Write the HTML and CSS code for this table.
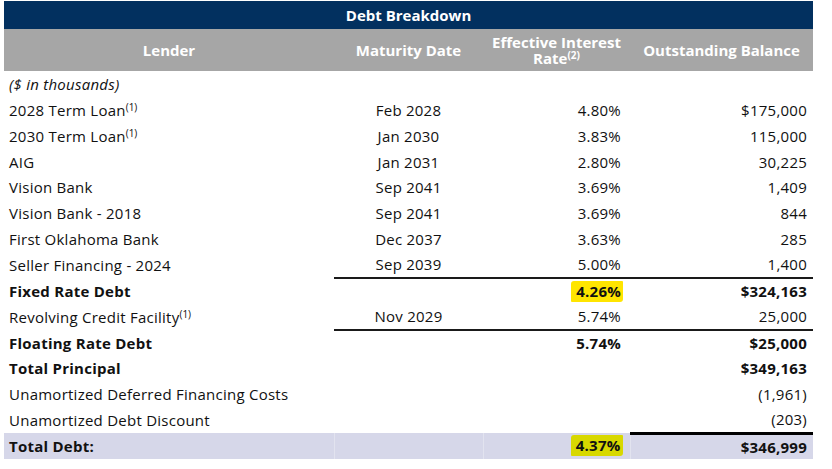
FILE: index.html
```html
<!DOCTYPE html>
<html>
<head>
<meta charset="utf-8">
<link rel="stylesheet" href="styles.css">
</head>
<body>
<table class="debt">
  <colgroup>
    <col class="c-lender"><col class="c-date"><col class="c-rate"><col class="c-bal">
  </colgroup>
  <thead>
    <tr class="title"><th colspan="4">Debt Breakdown</th></tr>
    <tr class="heads">
      <th>Lender</th>
      <th>Maturity Date</th>
      <th><span class="hline">Effective Interest</span><span class="hline">Rate<sup>(2)</sup></span></th>
      <th>Outstanding Balance</th>
    </tr>
  </thead>
  <tbody>
    <tr><td class="note">($ in thousands)</td><td></td><td></td><td></td></tr>
    <tr><td>2028 Term Loan<sup>(1)</sup></td><td class="ctr">Feb 2028</td><td class="num rate">4.80%</td><td class="num">$175,000</td></tr>
    <tr><td>2030 Term Loan<sup>(1)</sup></td><td class="ctr">Jan 2030</td><td class="num rate">3.83%</td><td class="num">115,000</td></tr>
    <tr><td>AIG</td><td class="ctr">Jan 2031</td><td class="num rate">2.80%</td><td class="num">30,225</td></tr>
    <tr><td>Vision Bank</td><td class="ctr">Sep 2041</td><td class="num rate">3.69%</td><td class="num">1,409</td></tr>
    <tr><td>Vision Bank - 2018</td><td class="ctr">Sep 2041</td><td class="num rate">3.69%</td><td class="num">844</td></tr>
    <tr><td>First Oklahoma Bank</td><td class="ctr">Dec 2037</td><td class="num rate">3.63%</td><td class="num">285</td></tr>
    <tr class="ruled"><td>Seller Financing - 2024</td><td class="ctr">Sep 2039</td><td class="num rate">5.00%</td><td class="num">1,400</td></tr>
    <tr class="bold"><td>Fixed Rate Debt</td><td></td><td class="num rate"><span class="hl hl-yellow">4.26%</span></td><td class="num">$324,163</td></tr>
    <tr class="ruled"><td>Revolving Credit Facility<sup>(1)</sup></td><td class="ctr">Nov 2029</td><td class="num rate">5.74%</td><td class="num">25,000</td></tr>
    <tr class="bold"><td>Floating Rate Debt</td><td></td><td class="num rate">5.74%</td><td class="num">$25,000</td></tr>
    <tr class="bold"><td>Total Principal</td><td></td><td></td><td class="num">$349,163</td></tr>
    <tr><td>Unamortized Deferred Financing Costs</td><td></td><td></td><td class="num">(1,961)</td></tr>
    <tr><td>Unamortized Debt Discount</td><td></td><td></td><td class="num">(203)</td></tr>
    <tr class="bold total"><td>Total Debt:</td><td></td><td class="num rate"><span class="hl hl-olive">4.37%</span></td><td class="num topline">$346,999</td></tr>
  </tbody>
</table>
</body>
</html>
```

FILE: styles.css
```css
html, body {
  margin: 0;
  padding: 0;
  background: #ffffff;
}

body {
  padding: 1px 0 0 4px;
  font-family: "Open Sans", "Noto Sans", sans-serif;
  font-size: 15px;
  color: #111111;
}

.debt {
  border-collapse: collapse;
  table-layout: fixed;
  width: 809px;
}

.c-lender { width: 330px; }
.c-date { width: 149px; }
.c-rate { width: 147px; }
.c-bal { width: 183px; }

.debt th,
.debt td {
  padding: 0;
  white-space: nowrap;
}

.title th {
  background: #02305f;
  color: #ffffff;
  font-weight: bold;
  height: 28px;
  text-align: center;
}

.heads th {
  background: #a6a6a6;
  color: #ffffff;
  font-weight: bold;
  height: 42px;
  text-align: center;
  vertical-align: middle;
}

.hline {
  display: block;
  line-height: 16px;
}

.heads th sup {
  font-size: 10px;
  line-height: 0;
  vertical-align: 5px;
}

.debt tbody tr {
  height: 25.86px;
}

.debt tbody td {
  vertical-align: middle;
  letter-spacing: 0.25px;
}

.debt tbody td:first-child {
  padding-left: 5px;
}

.note {
  font-style: italic;
}

.ctr {
  text-align: center;
  padding-right: 1px;
}

.num {
  text-align: right;
  padding-right: 6px !important;
}

.num.rate {
  padding-right: 9px !important;
}

.debt sup {
  font-size: 10px;
  line-height: 0;
  vertical-align: 5px;
  letter-spacing: 0;
}

.bold td {
  font-weight: bold;
  letter-spacing: 0;
}

.ruled td:not(:first-child) {
  border-bottom: 2px solid #1a1a1a;
}

.total td {
  background: #d6d7e9;
  border-left: 1px solid #e2e3ef;
}

.total td:first-child {
  border-left: none;
}

.total .topline {
  border-top: 3px solid #000000;
}

.hl {
  display: inline-block;
  padding: 1px 2px 1px 5px;
  margin-right: -2px;
  border-radius: 3px 1px 3px 1px;
  line-height: 19px;
}

.hl-yellow {
  background: #ffe500;
}

.hl-olive {
  background: #d8d800;
}
```
